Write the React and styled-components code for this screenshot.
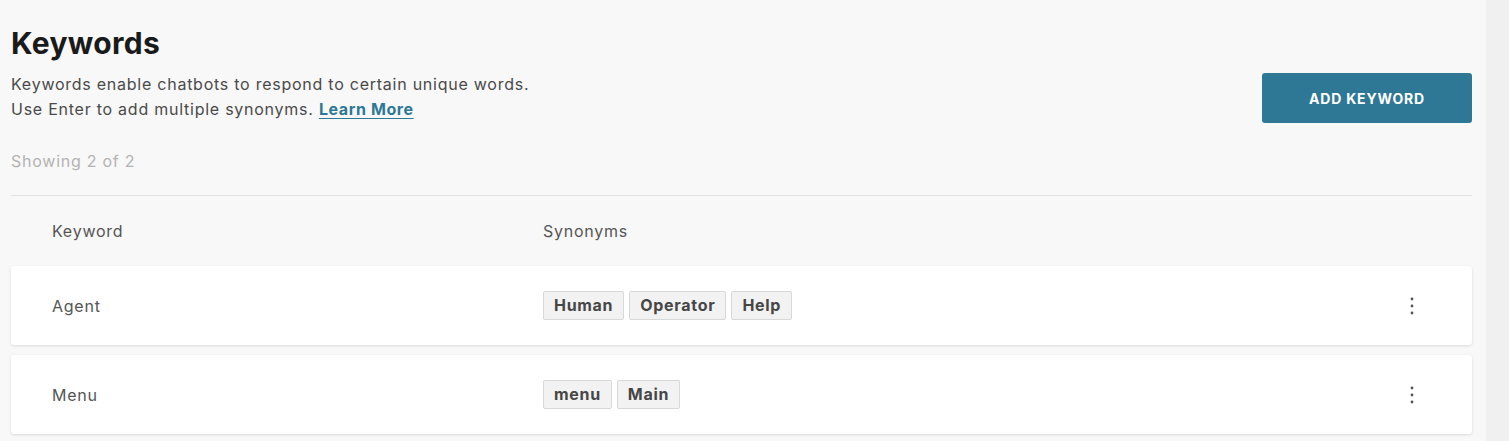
import React from 'react';
import styled, { createGlobalStyle } from 'styled-components';

const GlobalStyle = createGlobalStyle`
  body {
    margin: 0;
    background: #f8f8f8;
    font-family: Inter, "Liberation Sans", sans-serif;
    letter-spacing: 0.75px;
  }
`;

const keywords = [
  { name: 'Agent', synonyms: ['Human', 'Operator', 'Help'] },
  { name: 'Menu', synonyms: ['menu', 'Main'] },
];

const Shell = styled.div`
  display: flex;
  height: 441px;
  overflow: hidden;
`;

const Main = styled.main`
  flex: 1;
  padding: 24px 14px 0 11px;
  background: #f8f8f8;
`;

const Gutter = styled.div`
  width: 23px;
  background: #f0f0f0;
`;

const Header = styled.div`
  display: flex;
  justify-content: space-between;
  align-items: flex-start;
`;

const Title = styled.h1`
  margin: 0;
  font-size: 30px;
  font-weight: 700;
  line-height: 38px;
  letter-spacing: 0.35px;
  color: #1a1a1a;
`;

const Description = styled.p`
  margin: 10px 0 0;
  font-size: 16px;
  line-height: 25px;
  color: #4a4a4a;
`;

const LearnMore = styled.a`
  color: #2e7896;
  font-weight: 700;
  letter-spacing: 0.6px;
  text-decoration: underline;
  text-underline-offset: 3px;
`;

const AddButton = styled.button`
  margin-top: 49px;
  width: 210px;
  height: 50px;
  border: none;
  border-radius: 3px;
  background: #2e7896;
  color: #fff;
  font-family: Inter, "Liberation Sans", sans-serif;
  font-size: 14px;
  font-weight: 700;
  letter-spacing: 0.8px;
`;

const Count = styled.div`
  margin-top: 28px;
  font-size: 16px;
  line-height: 20px;
  color: #b3b3b3;
  padding-bottom: 24px;
  border-bottom: 1px solid #e2e2e2;
`;

const Row = styled.div`
  display: grid;
  grid-template-columns: 491px 1fr 62px;
  align-items: center;
  padding-left: 41px;
  font-size: 16px;
  color: #555;
`;

const HeadRow = styled(Row)`
  height: 70px;
`;

const Card = styled(Row)`
  height: 79px;
  background: #fff;
  border-radius: 3px;
  box-shadow: 0 1px 3px rgba(0, 0, 0, 0.12);
  margin-bottom: 10px;
`;

const Tags = styled.div`
  display: flex;
  gap: 5px;
`;

const Tag = styled.span`
  height: 27px;
  line-height: 27px;
  padding: 0 10px;
  background: #f2f2f2;
  border: 1px solid #d8d8d8;
  border-radius: 2px;
  font-weight: 700;
  letter-spacing: 0.7px;
  color: #464646;
`;

const Kebab = styled.button`
  display: flex;
  padding: 0;
  border: none;
  background: none;
`;

const Dots = () => (
  <svg width="4" height="18" viewBox="0 0 4 18">
    <circle cx="2" cy="2" r="1.4" fill="#555" />
    <circle cx="2" cy="9" r="1.4" fill="#555" />
    <circle cx="2" cy="16" r="1.4" fill="#555" />
  </svg>
);

export default function App() {
  return (
    <>
      <GlobalStyle />
      <Shell>
        <Main>
          <Header>
            <div>
              <Title>Keywords</Title>
              <Description>
                Keywords enable chatbots to respond to certain unique words.
                <br />
                Use Enter to add multiple synonyms. <LearnMore href="#">Learn More</LearnMore>
              </Description>
            </div>
            <AddButton>ADD KEYWORD</AddButton>
          </Header>
          <Count>Showing 2 of 2</Count>
          <HeadRow>
            <span>Keyword</span>
            <span>Synonyms</span>
          </HeadRow>
          {keywords.map((k) => (
            <Card key={k.name}>
              <span>{k.name}</span>
              <Tags>
                {k.synonyms.map((s) => (
                  <Tag key={s}>{s}</Tag>
                ))}
              </Tags>
              <Kebab>
                <Dots />
              </Kebab>
            </Card>
          ))}
        </Main>
        <Gutter />
      </Shell>
    </>
  );
}
